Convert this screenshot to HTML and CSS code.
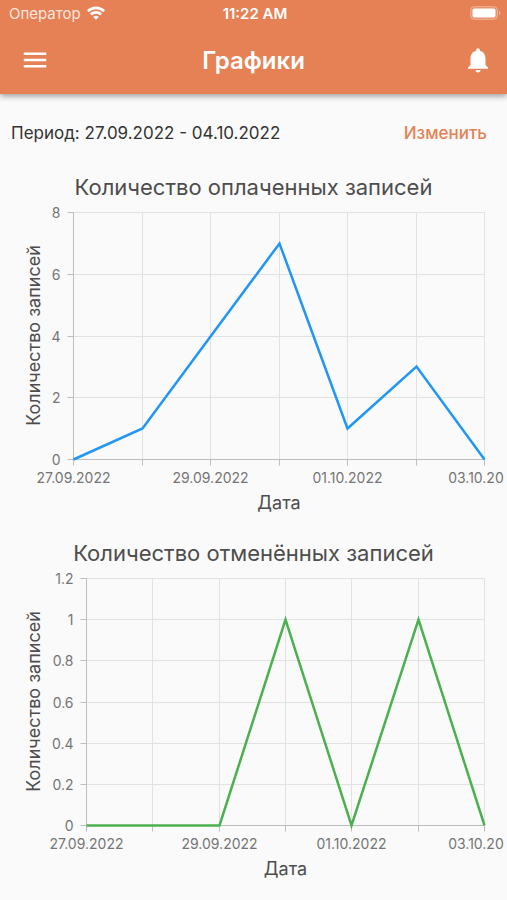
FILE: index.html
```html
<!DOCTYPE html>
<html lang="ru">

<head>
  <meta charset="utf-8" />
  <meta name="viewport" content="width=device-width,initial-scale=1.0" />
  <title>Графики</title>
  <link rel="stylesheet" href="styles.css">
</head>

<body>
  <header class="header">
    <div class="status">
      <div class="status-left">
        <span>Оператор</span>
        <svg width="18" height="14" viewBox="0 0 18 14" fill="none" stroke="#fff" stroke-width="2.6">
          <path d="M0.9 5.2a11.6 11.6 0 0 1 16.2 0" />
          <path d="M3.9 8.5a7.3 7.3 0 0 1 10.2 0" />
          <path d="M9 13.8L6.2 11a4 4 0 0 1 5.6 0z" fill="#fff" stroke="none" />
        </svg>
      </div>
      <span class="status-time">11:22 AM</span>
      <div class="status-right">
        <svg width="31" height="14" viewBox="0 0 31 14">
          <rect x="0.5" y="0.5" width="27" height="13" rx="4" fill="#fff" fill-opacity=".15" stroke="#fff" stroke-opacity=".3" />
          <rect x="2.5" y="2.5" width="23" height="9" rx="2" fill="#fff" />
          <path d="M29 4.8v4.4a2.4 2.4 0 0 0 0-4.4z" fill="#fff" fill-opacity=".4" />
        </svg>
      </div>
    </div>
    <div class="toolbar">
      <button class="menu-btn" type="button" aria-label="Меню">
        <svg width="30" height="30" viewBox="0 0 24 24" fill="#fff">
          <path d="M3 18h18v-2H3v2zm0-5h18v-2H3v2zm0-7v2h18V6H3z" />
        </svg>
      </button>
      <h1>Графики</h1>
      <button class="bell-btn" type="button" aria-label="Уведомления">
        <svg width="30" height="30" viewBox="0 0 24 24" fill="#fff">
          <path d="M12 22c1.1 0 2-.9 2-2h-4c0 1.1.89 2 2 2zm6-6v-5c0-3.07-1.64-5.64-4.5-6.32V4c0-.83-.67-1.5-1.5-1.5s-1.5.67-1.5 1.5v.68C7.63 5.36 6 7.92 6 11v5l-2 2v1h16v-1l-2-2z" />
        </svg>
      </button>
    </div>
  </header>

  <main>
    <div class="period">
      <span>Период: 27.09.2022 - 04.10.2022</span>
      <button class="period-btn" type="button">Изменить</button>
    </div>

    <section class="chart">
      <h2>Количество оплаченных записей</h2>
      <svg class="plot" id="paid"></svg>
    </section>

    <section class="chart">
      <h2>Количество отменённых записей</h2>
      <svg class="plot" id="canceled"></svg>
    </section>
  </main>

  <script src="charts.js"></script>
</body>

</html>
```
FILE: styles.css
```css
* {
  box-sizing: border-box;
}

body {
  margin: 0;
  background: #fafafa;
  color: #333;
  font-family: Inter, "Liberation Sans", sans-serif;
  font-size: 17px;
}

button {
  padding: 0;
  border: 0;
  background: none;
  font: inherit;
  cursor: pointer;
}

svg {
  display: block;
}

.header {
  background: #e68155;
  color: #fff;
  box-shadow: 0 2px 6px rgba(0, 0, 0, .4);
}

.status {
  display: grid;
  grid-template-columns: 1fr auto 1fr;
  align-items: center;
  height: 26px;
  padding: 0 6px 0 9px;
  font-size: 15px;
}

.status-left {
  display: flex;
  align-items: center;
  gap: 6px;
}

.status-left span {
  opacity: .8;
}

.status-time {
  font-weight: 600;
}

.status-right {
  display: flex;
  justify-content: flex-end;
}

.toolbar {
  display: grid;
  grid-template-columns: 1fr auto 1fr;
  align-items: center;
  height: 68px;
  padding: 0 14px;
}

.toolbar h1 {
  margin: 0;
  font-size: 24px;
  font-weight: 600;
}

.menu-btn {
  justify-self: start;
  padding-left: 6px;
}

.bell-btn {
  justify-self: end;
}

.period {
  display: flex;
  align-items: center;
  justify-content: space-between;
  height: 78px;
  padding: 0 20px 0 11px;
}

.period-btn {
  color: #e68155;
  font-weight: 500;
}

.chart {
  margin-bottom: 20px;
}

.chart h2 {
  margin: 0;
  color: #4d4d4d;
  font-size: 22px;
  font-weight: 400;
  line-height: 30px;
  text-align: center;
}

.plot {
  width: calc(100% - 3px);
  height: 316px;
  overflow: hidden;
}

.grid {
  stroke: #e2e2e2;
}

.axis {
  stroke: #bdbdbd;
}

.line {
  fill: none;
  stroke-width: 2.5;
}

.tick {
  fill: #757575;
  font-size: 14px;
}

.axis-title {
  fill: #4d4d4d;
  font-size: 18px;
  text-anchor: middle;
}
```
FILE: charts.js
```js
const NS = 'http://www.w3.org/2000/svg';
const TOP = 10;
const BOTTOM = 257;
const RIGHT = 19;

const dates = ['27.09.2022', '28.09.2022', '29.09.2022', '30.09.2022', '01.10.2022', '02.10.2022', '03.10.2022'];

const charts = [
  { id: 'paid', color: '#2196f3', left: 73, max: 8, ticks: [0, 2, 4, 6, 8], data: [0, 1, 4, 7, 1, 3, 0] },
  { id: 'canceled', color: '#4caf50', left: 86, max: 1.2, ticks: [0, 0.2, 0.4, 0.6, 0.8, 1, 1.2], data: [0, 0, 0, 1, 0, 1, 0] }
];

function add(svg, name, attrs, text) {
  const el = document.createElementNS(NS, name);
  Object.keys(attrs).forEach(key => el.setAttribute(key, attrs[key]));
  if (text !== undefined) el.textContent = text;
  svg.appendChild(el);
}

function line(svg, cls, x1, y1, x2, y2) {
  add(svg, 'line', { class: cls, x1, y1, x2, y2 });
}

function draw(chart) {
  const svg = document.getElementById(chart.id);
  svg.innerHTML = '';

  const left = chart.left + 0.5;
  const right = svg.clientWidth - RIGHT - 0.5;
  const getX = i => Math.floor(left + (right - left) * i / (dates.length - 1)) + 0.5;
  const getY = v => Math.round(BOTTOM - (BOTTOM - TOP) * v / chart.max) + 0.5;

  // grid
  dates.forEach((date, i) => line(svg, 'grid', getX(i), getY(chart.max), getX(i), getY(0)));
  chart.ticks.forEach(v => line(svg, 'grid', left, getY(v), right, getY(v)));

  // axes
  line(svg, 'axis', left, getY(chart.max), left, getY(0));
  line(svg, 'axis', left, getY(0), right, getY(0));

  chart.ticks.forEach(v => {
    line(svg, 'axis', left - 6, getY(v), left, getY(v));
    add(svg, 'text', { class: 'tick', x: left - 13, y: getY(v) + 5, 'text-anchor': 'end' }, v);
  });

  dates.forEach((date, i) => {
    line(svg, 'axis', getX(i), getY(0), getX(i), getY(0) + 6);
    // every second date only, there is no room for all
    if (i % 2 === 0) {
      add(svg, 'text', { class: 'tick', x: getX(i), y: getY(0) + 23, 'text-anchor': 'middle' }, date);
    }
  });

  // titles
  const middle = (TOP + BOTTOM) / 2;
  add(svg, 'text', { class: 'axis-title', x: (left + right) / 2, y: BOTTOM + 50 }, 'Дата');
  add(svg, 'text', { class: 'axis-title', transform: `translate(40 ${middle}) rotate(-90)` }, 'Количество записей');

  const points = chart.data.map((v, i) => `${getX(i)},${getY(v)}`).join(' ');
  add(svg, 'polyline', { class: 'line', stroke: chart.color, points });
}

function drawAll() {
  charts.forEach(draw);
}

window.addEventListener('resize', drawAll);
drawAll();
```
